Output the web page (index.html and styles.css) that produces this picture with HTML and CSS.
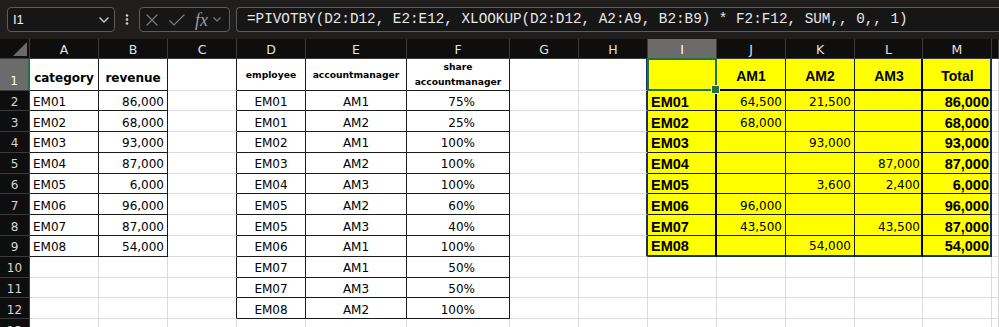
FILE: index.html
```html
<!DOCTYPE html>
<html lang="en">
<head>
    <meta charset="UTF-8">
    <meta name="viewport" content="width=device-width, initial-scale=1.0">
    <title>PIVOTBY com XLOOKUP</title>
    <link rel="stylesheet" href="styles.css">
</head>
<body>
    <div class="formula-bar">
        <div class="name-box">
            <span>I1</span>
            <svg class="chev" width="10" height="6" viewBox="0 0 10 6"><path d="M0.5 0.5 L5 5 L9.5 0.5"/></svg>
        </div>
        <div class="grip">
            <svg width="4" height="12" viewBox="0 0 4 12"><circle cx="2" cy="1.5" r="1.3"/><circle cx="2" cy="5.5" r="1.3"/><circle cx="2" cy="9.5" r="1.3"/></svg>
        </div>
        <div class="fx-box">
            <svg class="ico ico-x" width="12" height="12" viewBox="0 0 12 12"><path d="M0.5 0.5 L11.5 11.5 M11.5 0.5 L0.5 11.5"/></svg>
            <svg class="ico ico-ok" width="16" height="12" viewBox="0 0 16 12"><path d="M0.5 6.5 L5 11 L15.5 0.5"/></svg>
            <span class="fx">fx</span>
            <svg class="ico ico-down" width="8" height="5" viewBox="0 0 8 5"><path d="M0.5 0.5 L4 4 L7.5 0.5"/></svg>
        </div>
        <div class="formula">=PIVOTBY(D2:D12, E2:E12, XLOOKUP(D2:D12, A2:A9, B2:B9) * F2:F12, SUM,, 0,, 1)</div>
    </div>

    <div class="sheet" id="sheet"></div>

    <script>
        // colunas A..N (N só aparece na borda), linhas 1..13
        const letters = ["A", "B", "C", "D", "E", "F", "G", "H", "I", "J", "K", "L", "M", ""];

        const rows = [
            ["category", "revenue", "", "employee", "accountmanager", "share<br>accountmanager", "", "", "", "AM1", "AM2", "AM3", "Total"],
            ["EM01", "86,000", "", "EM01", "AM1", "75%", "", "", "EM01", "64,500", "21,500", "", "86,000"],
            ["EM02", "68,000", "", "EM01", "AM2", "25%", "", "", "EM02", "68,000", "", "", "68,000"],
            ["EM03", "93,000", "", "EM02", "AM1", "100%", "", "", "EM03", "", "93,000", "", "93,000"],
            ["EM04", "87,000", "", "EM03", "AM2", "100%", "", "", "EM04", "", "", "87,000", "87,000"],
            ["EM05", "6,000", "", "EM04", "AM3", "100%", "", "", "EM05", "", "3,600", "2,400", "6,000"],
            ["EM06", "96,000", "", "EM05", "AM2", "60%", "", "", "EM06", "96,000", "", "", "96,000"],
            ["EM07", "87,000", "", "EM05", "AM3", "40%", "", "", "EM07", "43,500", "", "43,500", "87,000"],
            ["EM08", "54,000", "", "EM06", "AM1", "100%", "", "", "EM08", "", "54,000", "", "54,000"],
            ["", "", "", "EM07", "AM1", "50%"],
            ["", "", "", "EM07", "AM3", "50%"],
            ["", "", "", "EM08", "AM2", "100%"],
            []
        ];

        const tables = [
            { r0: 1, r1: 9, c0: 1, c1: 2, head: "head-big", align: ["left", "right"] },
            { r0: 1, r1: 12, c0: 4, c1: 6, head: "head-small", align: ["center", "center", "right pct"] },
            { r0: 1, r1: 9, c0: 9, c1: 13, head: "head-pivot", align: ["left bold", "right", "right", "right", "right bold"], pivot: true }
        ];

        const sheet = document.getElementById("sheet");

        function tableAt(r, c) {
            return tables.find(t => r >= t.r0 && r <= t.r1 && c >= t.c0 && c <= t.c1);
        }

        function add(cls, html) {
            const d = document.createElement("div");
            d.className = cls;
            d.innerHTML = html;
            sheet.appendChild(d);
        }

        add("corner", '<svg width="16" height="15" viewBox="0 0 16 15"><polygon points="15,0 15,14 1,14"/></svg>');
        letters.forEach((l, i) => add(i === 8 ? "col-head active" : "col-head", l));

        for (let r = 1; r <= 13; r++) {
            add(r === 1 ? "row-head active" : "row-head", r);
            for (let c = 1; c <= 14; c++) {
                const t = tableAt(r, c);
                const cls = ["cell"];
                if (t || tableAt(r, c + 1)) cls.push("line-r");
                if (t || tableAt(r + 1, c)) cls.push("line-b");
                if (t) {
                    cls.push(r === t.r0 ? t.head : t.align[c - t.c0]);
                    if (t.pivot) {
                        cls.push("pivot");
                        if (c === 9 || c === 12) cls.push("thick-r");
                        if (c === 13) cls.push("edge-r");
                        if (r === 1) cls.push("thick-b");
                        if (r === 9) cls.push("edge-b");
                    }
                }
                if (c === 8 && r <= 9) cls.push("edge-r"); // borda do intervalo despejado
                if (r === 1 && c === 9) cls.push("sel");
                add(cls.join(" "), rows[r - 1][c - 1] || "");
            }
        }
    </script>
</body>
</html>
```

FILE: styles.css
```css
/* Geral */
* {
    box-sizing: border-box;
}

html, body {
    margin: 0;
    padding: 0;
    overflow: hidden;
}

body {
    width: 999px;
    height: 327px;
    background: #fff;
    font-family: "DejaVu Sans", sans-serif;
}

/* Barra de fórmulas */
.formula-bar {
    display: flex;
    align-items: center;
    height: 39px;
    padding-left: 7px;
    background: #1f1e1d;
}

.name-box, .fx-box, .formula {
    height: 25px;
    border: 1px solid #5c5c5c;
    border-radius: 4px;
    background: #161616;
}

.name-box {
    display: flex;
    align-items: center;
    justify-content: space-between;
    width: 108px;
    padding: 0 5px 0 5px;
    color: #f2f2f2;
    font: 13px "Liberation Sans", sans-serif;
}

.chev path {
    fill: none;
    stroke: #d0d0d0;
    stroke-width: 1.3;
}

.grip {
    display: flex;
    justify-content: center;
    width: 24px;
}

.grip circle {
    fill: #cfcfcf;
}

.fx-box {
    display: flex;
    align-items: center;
    width: 91px;
    padding-left: 6px;
}

.ico path {
    fill: none;
    stroke: #7b7b7b;
    stroke-width: 1.2;
}

.ico-ok {
    margin-left: 11px;
}

.fx {
    margin-left: 10px;
    color: #9c9c9c;
    font: italic 18px "Liberation Serif", serif;
    line-height: 18px;
}

.ico-down {
    margin-left: 5px;
}

.formula {
    flex: 1;
    margin-left: 6px;
    border-right: none;
    border-radius: 4px 0 0 4px;
    padding-left: 10px;
    color: #e8e8e8;
    font: 14.3px "Liberation Mono", monospace;
    line-height: 23px;
    white-space: nowrap;
}

/* Planilha */
.sheet {
    display: grid;
    grid-template-columns: 30px 69px 69px 69px 69px 101px 103px 69px 69px 69px 69px 69px 68px 69px 7px;
    grid-template-rows: 20px 31.5px repeat(12, 20.8px);
}

.corner, .col-head, .row-head {
    display: flex;
    background: #0e0e0e;
    color: #e2e2e2;
    border-right: 1px solid #3b3b3b;
    border-bottom: 1px solid #3b3b3b;
    line-height: 14px;
}

.corner {
    align-items: flex-end;
    justify-content: flex-end;
    padding: 0 1px 1px 0;
}

.corner polygon {
    fill: #6a6a6a;
}

.col-head {
    align-items: flex-end;
    justify-content: center;
    padding-bottom: 1px;
    font-size: 12.5px;
}

.row-head {
    align-items: flex-end;
    justify-content: center;
    padding-bottom: 1.5px;
    font-size: 12px;
    color: #d6d6d6;
}

.col-head.active, .row-head.active {
    background: #6b6b6b;
    color: #fff;
}

.col-head.active {
    border-bottom-color: #217346;
}

.row-head.active {
    border-right: 2px solid #217346;
}

.cell {
    display: flex;
    align-items: flex-end;
    padding: 0 3px 1.5px;
    border-right: 1px solid #dcdcdc;
    border-bottom: 1px solid #dcdcdc;
    color: #000;
    font-size: 12px;
    line-height: 14px;
    white-space: nowrap;
    overflow: hidden;
}

.left {
    justify-content: flex-start;
}

.center {
    justify-content: center;
}

.right {
    justify-content: flex-end;
}

.pct {
    padding-right: 34px;
}

.bold {
    font: bold 14.5px "Liberation Sans", sans-serif;
    line-height: 14px;
}

/* Cabeçalhos das tabelas */
.head-big {
    justify-content: center;
    padding-bottom: 5px;
    font-weight: bold;
}

.head-small {
    align-items: center;
    justify-content: center;
    padding: 0;
    font-size: 9.2px;
    font-weight: bold;
    line-height: 15px;
    text-align: center;
    white-space: normal;
}

.head-pivot {
    justify-content: center;
    padding-bottom: 6px;
    font: bold 14px "Liberation Sans", sans-serif;
    line-height: 14px;
}

/* Bordas */
.line-r {
    border-right-color: #1a1a1a;
}

.line-b {
    border-bottom-color: #1a1a1a;
}

.pivot {
    background: #ffff00;
}

.thick-r {
    border-right: 2px solid #000;
    padding-right: 1px;
}

.thick-b {
    border-bottom: 2px solid #000;
}

.edge-r {
    border-right: 2px solid #1b2f66;
    padding-right: 1px;
}

.edge-b {
    border-bottom: 2px solid #1b2f66;
}

/* Célula selecionada */
.sel {
    position: relative;
    overflow: visible;
    z-index: 1;
}

.sel::after {
    content: "";
    position: absolute;
    left: -1px;
    top: -1px;
    right: -2px;
    bottom: -2px;
    border: 2px solid #217346;
}

.sel::before {
    content: "";
    position: absolute;
    right: -5px;
    bottom: -5px;
    width: 7px;
    height: 7px;
    background: #217346;
    border: 1px solid #fff;
    z-index: 2;
}
```
